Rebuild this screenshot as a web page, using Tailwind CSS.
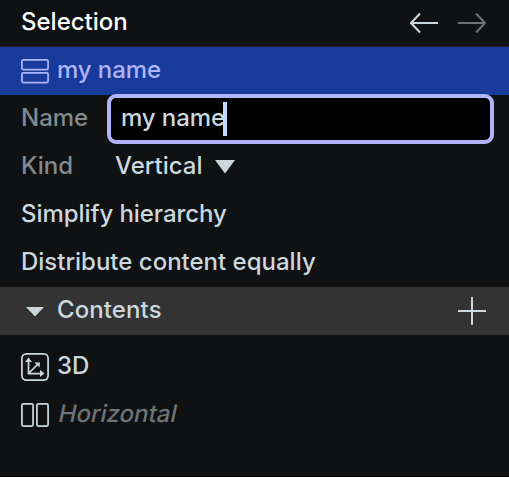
<!DOCTYPE html>
<html lang="en">
<head>
    <meta charset="UTF-8">
    <meta name="viewport" content="width=device-width, initial-scale=1.0">
    <title>Selection</title>
    <script src="https://cdn.jsdelivr.net/npm/@tailwindcss/browser@4"></script>
</head>
<body class="h-screen overflow-hidden bg-[#0f1113] font-['Inter',sans-serif] text-[24px] leading-[48px] font-medium text-[#cad8de]">
    <div class="flex flex-col h-full border-b border-black">
        <!-- Header -->
        <header class="flex justify-between h-[47px] pl-[21px] pr-[23px] border-b border-[#232528]">
            <h1 class="text-white leading-[44px]">Selection</h1>
            <div class="flex gap-5 pt-[9px]">
                <button type="button" class="h-7">
                    <svg class="w-7 h-7" viewBox="0 0 28 28" fill="none" stroke="#cad8de" stroke-width="2"><path d="M28 14H1M10 4.5L1 14L10 23.5"/></svg>
                </button>
                <button type="button" class="h-7">
                    <svg class="w-7 h-7" viewBox="0 0 28 28" fill="none" stroke="#6c7375" stroke-width="2"><path d="M0 14H27M18 4.5L27 14L18 23.5"/></svg>
                </button>
            </div>
        </header>

        <!-- Selected item -->
        <div class="flex gap-2 h-12 pl-[21px] bg-[#183b9b] text-[#aeb5fc]">
            <svg class="w-7 h-7 mt-[10px]" viewBox="0 0 28 28" fill="none" stroke="currentColor" stroke-width="1.75"><rect x="0.9" y="2.9" width="26.2" height="9.7" rx="1.5"/><rect x="0.9" y="15.9" width="26.2" height="9.7" rx="1.5"/></svg>
            <span class="leading-[46px] tracking-[-0.1px]">my name</span>
        </div>

        <!-- Properties -->
        <div class="flex h-12 pl-[21px] pr-[15px]">
            <label class="w-[86px] leading-[46px] text-[#818a8f]">Name</label>
            <div class="flex flex-1 h-[50px] -mt-px pl-[10px] border-4 border-[#b0b5fb] rounded-[9px] bg-black">
                <span class="leading-[40px] tracking-[-0.1px]">my name</span>
                <span class="w-1 h-[34px] mt-1 -ml-0.5 bg-[#c2dcff]"></span>
            </div>
        </div>
        <div class="flex h-12 pl-[21px]">
            <label class="w-[94px] leading-[46px] text-[#818a8f]">Kind</label>
            <span class="leading-[46px]">Vertical</span>
            <svg class="w-5 h-[14px] ml-[13px] mt-[17px]" viewBox="0 0 20 14" fill="currentColor"><path d="M0 0H20L10 13.5Z"/></svg>
        </div>
        <div class="h-12 pl-[21px] leading-[46px] tracking-[-0.07px]">Simplify hierarchy</div>
        <div class="h-12 pl-[21px] leading-[46px]">Distribute content equally</div>

        <!-- Contents -->
        <div class="flex h-12 pl-[26px] pr-[23px] bg-[#333333]">
            <svg class="w-[18px] h-[10px] mt-5" viewBox="0 0 18 10" fill="currentColor"><path d="M0 0H18L9 9.5Z"/></svg>
            <span class="ml-[13px] leading-[46px] tracking-[0.1px]">Contents</span>
            <button type="button" class="ml-auto h-7 mt-[10px]">
                <svg class="w-7 h-7" viewBox="0 0 28 28" fill="none" stroke="#cad8de" stroke-width="2"><path d="M14 0V28M0 14H28"/></svg>
            </button>
        </div>
        <div class="flex gap-2 h-12 mt-2 pl-[21px]">
            <svg class="w-7 h-7 mt-[10px]" viewBox="0 0 28 28" fill="none" stroke="currentColor" stroke-width="1.75">
                <rect x="0.9" y="0.9" width="26.2" height="26.2" rx="4.5"/>
                <path d="M7.5 8V20.5H20M7.5 20.5L16.5 11.5"/>
                <path d="M7.5 4.5L11 9H4ZM23.5 20.5L19 24V17ZM19 9.5L18.5 14.5L13.5 9.5Z" fill="currentColor" stroke="none"/>
            </svg>
            <span class="leading-[46px]">3D</span>
        </div>
        <div class="flex gap-2 h-12 pl-[21px]">
            <svg class="w-7 h-7 mt-[10px]" viewBox="0 0 28 28" fill="none" stroke="currentColor" stroke-width="1.75"><rect x="0.9" y="2.9" width="11.2" height="22.2" rx="1.5"/><rect x="15.9" y="2.9" width="11.2" height="22.2" rx="1.5"/></svg>
            <!-- unnamed items: slanted roman instead of the true italic -->
            <span class="h-[46px] pl-0.5 leading-[46px] -skew-x-12 text-[#6d7376]">Horizontal</span>
        </div>
    </div>
</body>
</html>
